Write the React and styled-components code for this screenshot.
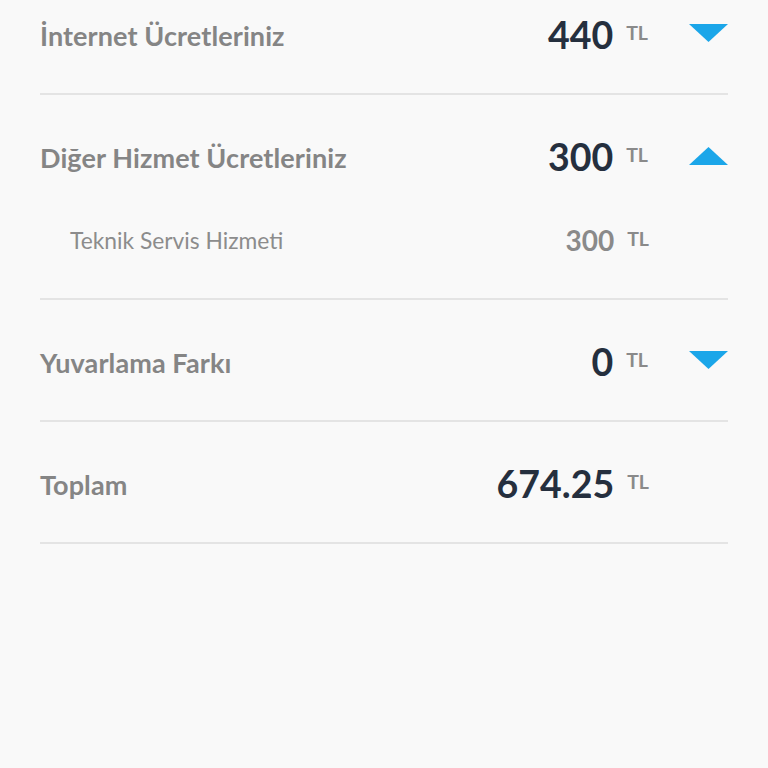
import React from 'react';
import styled, { createGlobalStyle } from 'styled-components';

const Global = createGlobalStyle`
  html, body {
    margin: 0;
    padding: 0;
    background: #f9f9f9;
    font-family: Lato, "Open Sans", sans-serif;
  }
`;

const Page = styled.div`
  width: 768px;
  height: 768px;
  overflow: hidden;
  background: #f9f9f9;
  padding: 0 40px 0 40px;
  box-sizing: border-box;
`;

const Section = styled.section`
  border-bottom: 2px solid #e4e4e4;
  padding-top: ${p => (p.first ? '10px' : '37px')};
  padding-bottom: 33px;
`;

const Row = styled.div`
  display: flex;
  align-items: center;
  height: 50px;
  padding-left: ${p => (p.sub ? '30px' : '0')};
  margin-top: ${p => (p.sub ? '33px' : '0')};
`;

const Label = styled.div`
  flex: 1;
  font-size: ${p => (p.sub ? '22.8px' : '27px')};
  font-weight: ${p => (p.sub ? 400 : 700)};
  color: ${p => (p.sub ? '#8c8c8c' : '#858585')};
  letter-spacing: ${p => (p.sub ? '0' : '0.1px')};
`;

const Amount = styled.div`
  display: flex;
  align-items: flex-start;
  margin-right: ${p => (p.wide ? '79px' : '41px')};
`;

const Value = styled.span`
  font-size: ${p => (p.sub ? '28px' : '37.5px')};
  font-weight: 700;
  color: ${p => (p.sub ? '#8a8a8a' : '#252f3e')};
  line-height: 1;
`;

const Unit = styled.span`
  font-size: 19.5px;
  font-weight: 700;
  color: #8a8a8a;
  margin-left: 13px;
  line-height: 1;
  margin-top: ${p => (p.sub ? '3px' : '7px')};
`;

const Arrow = styled.svg`
  width: 39px;
  height: 22px;
  display: block;
`;

const Caret = ({ up }) => (
  <Arrow viewBox="0 0 39 22">
    {up ? (
      <polygon points="0,19 39,19 19.5,1" fill="#1ba6e9" />
    ) : (
      <polygon points="0,0 39,0 19.5,18" fill="#1ba6e9" />
    )}
  </Arrow>
);

const Line = ({ label, value, open, sub, arrow = true }) => (
  <Row sub={sub}>
    <Label sub={sub}>{label}</Label>
    <Amount wide={!arrow}>
      <Value sub={sub}>{value}</Value>
      <Unit sub={sub}>TL</Unit>
    </Amount>
    {arrow && <Caret up={open} />}
  </Row>
);

const App = () => (
  <Page>
    <Global />
    <Section first>
      <Line label="İnternet Ücretleriniz" value="440" />
    </Section>
    <Section>
      <Line label="Diğer Hizmet Ücretleriniz" value="300" open />
      <Line label="Teknik Servis Hizmeti" value="300" sub arrow={false} />
    </Section>
    <Section>
      <Line label="Yuvarlama Farkı" value="0" />
    </Section>
    <Section>
      <Line label="Toplam" value="674.25" arrow={false} />
    </Section>
  </Page>
);

export default App;
